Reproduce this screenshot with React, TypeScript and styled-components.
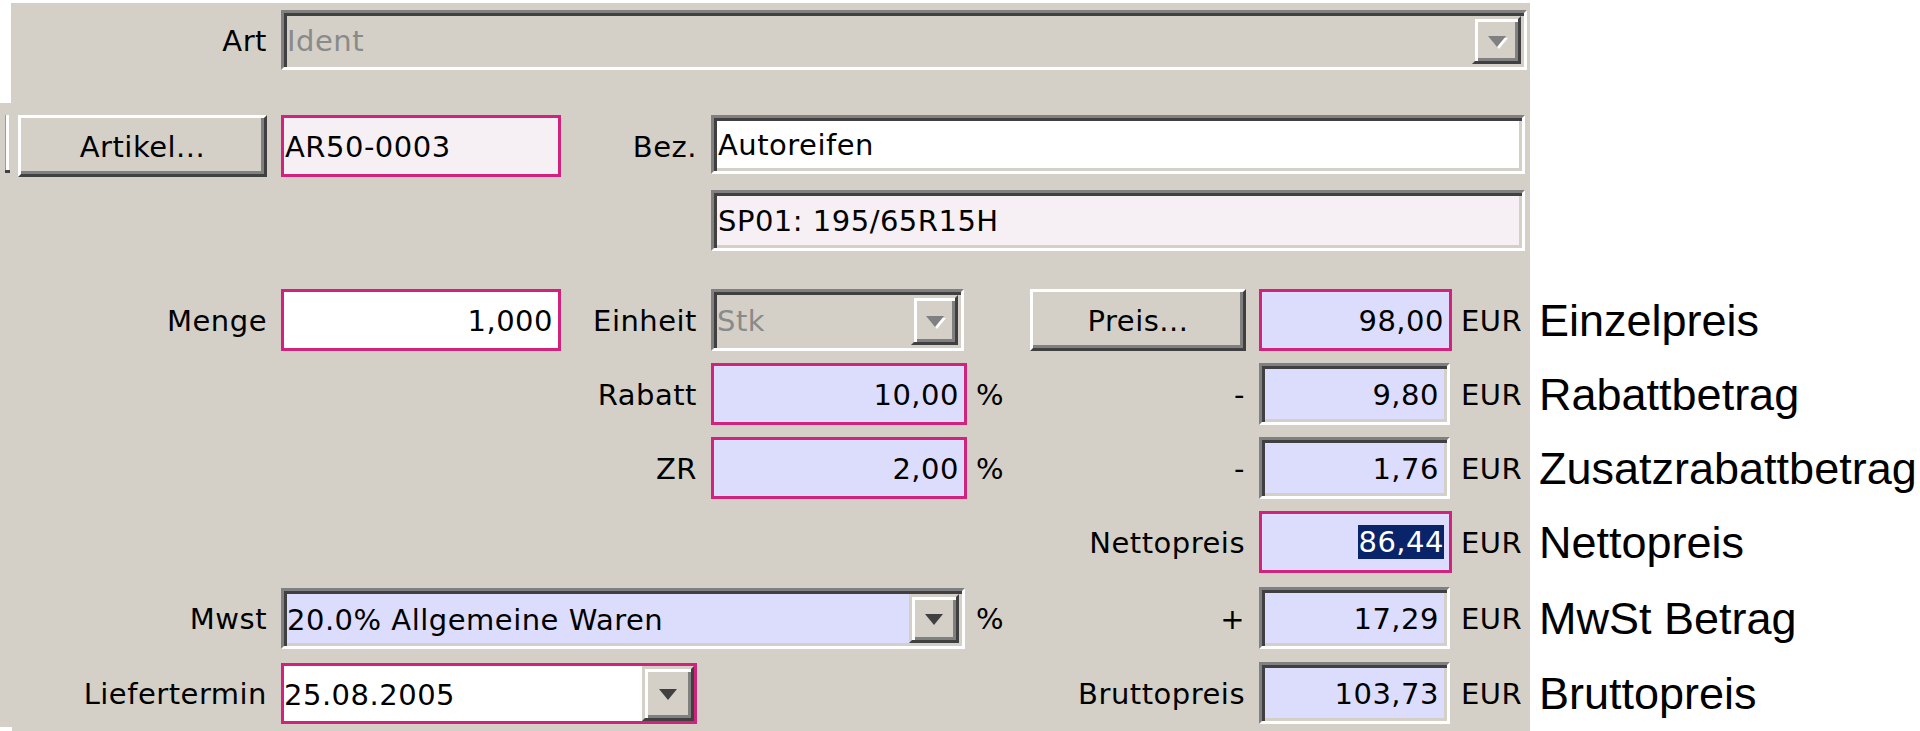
import React from "react";
import styled, { createGlobalStyle, css } from "styled-components";

const FACE = "#d4d0c8";
const PINK = "#d1237d";
const LAV = "#dcdcfc";
const PINKBG = "#f6f0f5";
const ROWS = "60px 107px 74px 100px 74px 74px 74px 76px 75px";

const GlobalStyle = createGlobalStyle`
  *, *::before, *::after { box-sizing: border-box; }
  html, body { margin: 0; padding: 0; background: #fff; overflow: hidden; }
  body { font-family: "DejaVu Sans", "Liberation Sans", sans-serif; }
`;

type Place = { $row: number; $col: number; $span?: number };

const place = css<Place>`
  grid-row: ${(p) => p.$row};
  grid-column: ${(p) => p.$col} / span ${(p) => p.$span ?? 1};
`;

const sunken = css`
  border-style: solid;
  border-width: 3px;
  border-color: #808080 #ffffff #ffffff #808080;
  box-shadow: inset 3px 3px 0 #404040, inset -3px -3px 0 ${FACE};
  padding: 3px;
`;

const raised = css`
  border-style: solid;
  border-width: 3px;
  border-color: #ffffff #404040 #404040 #ffffff;
  box-shadow: inset -3px -3px 0 #808080;
  background: ${FACE};
`;

const Page = styled.div`
  display: flex;
  align-items: flex-start;
  padding-top: 3px;
  width: 1920px;
  height: 731px;
`;

const Panel = styled.div`
  position: relative;
  flex: none;
  width: 1530px;
  height: 728px;
  padding: 7px 0;
  background: ${FACE};
  display: grid;
  grid-template-columns: 281px 280px 150px 256px 63px 229px 193px 78px;
  grid-template-rows: ${ROWS};
  align-items: end;
  font-size: 29px;
  letter-spacing: 0.5px;
  color: #000;

  &::before {
    content: "";
    position: absolute;
    left: 0;
    top: 0;
    width: 11px;
    height: 100px;
    background: #fff;
  }
  &::after {
    content: "";
    position: absolute;
    left: 0;
    bottom: 0;
    width: 12px;
    height: 4px;
    background: #fff;
  }
`;

const Label = styled.div<Place & { $h?: number }>`
  ${place};
  height: ${(p) => p.$h ?? 62}px;
  display: flex;
  align-items: center;
  justify-content: flex-end;
  padding: 2px 14px 0 0;
  white-space: nowrap;
  line-height: 1;
`;

const Unit = styled.div<Place>`
  ${place};
  height: 62px;
  display: flex;
  align-items: center;
  padding: 2px 0 0 9px;
  white-space: nowrap;
  line-height: 1;
`;

const fieldText = css<{ $right?: boolean }>`
  height: 62px;
  display: flex;
  align-items: center;
  justify-content: ${(p) => (p.$right ? "flex-end" : "flex-start")};
  white-space: nowrap;
  overflow: hidden;
  line-height: 1;
`;

const PinkField = styled.div<Place & { $bg: string; $right?: boolean }>`
  ${place};
  ${fieldText};
  border: 3px solid ${PINK};
  background: ${(p) => p.$bg};
  padding: 3px ${(p) => (p.$right ? 5 : 0)}px 0 ${(p) => (p.$right ? 0 : 1)}px;
`;

const SunkenField = styled.div<
  Place & { $bg: string; $right?: boolean; $h?: number; $mr?: number; $mb?: number }
>`
  ${place};
  ${fieldText};
  ${sunken};
  height: ${(p) => p.$h ?? 62}px;
  margin-right: ${(p) => p.$mr ?? 0}px;
  margin-bottom: ${(p) => p.$mb ?? 0}px;
  background: ${(p) => p.$bg};
  padding-top: 5px;
  padding-right: ${(p) => (p.$right ? 8 : 3)}px;
  padding-left: ${(p) => (p.$right ? 3 : 4)}px;
`;

const Selected = styled.span`
  background: #0a246a;
  color: #fff;
  line-height: 34px;
  margin-top: -3px;
`;

const Combo = styled.div<
  Place & { $bg: string; $pink?: boolean; $h?: number; $w?: number; $mr?: number }
>`
  ${place};
  height: ${(p) => p.$h ?? 62}px;
  width: ${(p) => (p.$w ? `${p.$w}px` : "auto")};
  justify-self: ${(p) => (p.$w ? "start" : "stretch")};
  margin-right: ${(p) => p.$mr ?? 0}px;
  display: flex;
  align-items: stretch;
  background: ${(p) => p.$bg};
  ${(p) =>
    p.$pink
      ? css`
          border: 3px solid ${PINK};
        `
      : sunken}
`;

const ComboText = styled.span<{ $disabled?: boolean }>`
  flex: 1;
  display: flex;
  align-items: center;
  padding-top: 3px;
  white-space: nowrap;
  overflow: hidden;
  line-height: 1;
  color: ${(p) => (p.$disabled ? "#8a8a8a" : "#000")};
`;

const DropButton = styled.span<{ $w: number }>`
  flex: none;
  width: ${(p) => p.$w}px;
  ${raised};
  border-color: ${FACE} #404040 #404040 ${FACE};
  box-shadow: inset 3px 3px 0 #ffffff, inset -3px -3px 0 #808080;
  display: flex;
  align-items: center;
  justify-content: center;
`;

const Arrow = styled.span<{ $disabled?: boolean }>`
  width: 0;
  height: 0;
  border-left: 9px solid transparent;
  border-right: 9px solid transparent;
  border-top: 11px solid ${(p) => (p.$disabled ? "#808080" : "#404040")};
  margin-top: 2px;
  ${(p) =>
    p.$disabled &&
    css`
      filter: drop-shadow(2px 2px 0 #ffffff);
    `}
`;

const ButtonCell = styled.div<Place>`
  ${place};
  height: 62px;
  display: flex;
  align-items: flex-start;
  gap: 8px;
  padding-left: 5px;
`;

const ClippedEdge = styled.span`
  flex: none;
  width: 5px;
  height: 58px;
  background: linear-gradient(to right, #9a9a9a 0 1px, #ffffff 1px 4px, ${FACE} 4px);
  border-bottom: 3px solid #404040;
`;

const PushButton = styled.div<Partial<Place> & { $w: number; $placed?: boolean }>`
  ${(p) => (p.$placed ? place : "")};
  flex: none;
  width: ${(p) => p.$w}px;
  height: 62px;
  justify-self: start;
  ${raised};
  display: flex;
  align-items: center;
  justify-content: center;
  padding-top: 2px;
  line-height: 1;
  white-space: nowrap;
`;

const Legend = styled.div`
  flex: 1;
  height: 728px;
  padding: 7px 0;
  display: grid;
  grid-template-rows: ${ROWS};
  align-items: end;
  font-family: "Liberation Sans", Arial, sans-serif;
  font-size: 45px;
  color: #000;
  overflow: hidden;
`;

const LegendItem = styled.div<{ $row: number }>`
  grid-row: ${(p) => p.$row};
  height: 62px;
  display: flex;
  align-items: center;
  padding-left: 9px;
  white-space: nowrap;
  line-height: 1;
`;

const prices = [
  { row: 4, sign: null, value: "98,00", pink: true, legend: "Einzelpreis" },
  { row: 5, sign: "-", value: "9,80", pink: false, legend: "Rabattbetrag" },
  { row: 6, sign: "-", value: "1,76", pink: false, legend: "Zusatzrabattbetrag" },
  { row: 7, sign: "Nettopreis", value: "86,44", pink: true, legend: "Nettopreis" },
  { row: 8, sign: "+", value: "17,29", pink: false, legend: "MwSt Betrag" },
  { row: 9, sign: "Bruttopreis", value: "103,73", pink: false, legend: "Bruttopreis" },
];

export default function App() {
  return (
    <>
      <GlobalStyle />
      <Page>
        <Panel>
          {/* Row 1 */}
          <Label $row={1} $col={1} $h={60}>Art</Label>
          <Combo $row={1} $col={2} $span={7} $bg={FACE} $h={60} $mr={3}>
            <ComboText $disabled>Ident</ComboText>
            <DropButton $w={49}>
              <Arrow $disabled />
            </DropButton>
          </Combo>

          {/* Row 2 */}
          <ButtonCell $row={2} $col={1}>
            <ClippedEdge />
            <PushButton $w={249}>Artikel...</PushButton>
          </ButtonCell>
          <PinkField $row={2} $col={2} $bg={PINKBG}>AR50-0003</PinkField>
          <Label $row={2} $col={3}>Bez.</Label>
          <SunkenField $row={2} $col={4} $span={5} $bg="#ffffff" $h={59} $mb={3} $mr={5}>
            Autoreifen
          </SunkenField>

          {/* Row 3 */}
          <SunkenField $row={3} $col={4} $span={5} $bg={PINKBG} $h={61} $mr={5}>
            SP01: 195/65R15H
          </SunkenField>

          {/* Row 4 */}
          <Label $row={4} $col={1}>Menge</Label>
          <PinkField $row={4} $col={2} $bg="#ffffff" $right>1,000</PinkField>
          <Label $row={4} $col={3}>Einheit</Label>
          <Combo $row={4} $col={4} $bg={FACE} $mr={3}>
            <ComboText $disabled>Stk</ComboText>
            <DropButton $w={47}>
              <Arrow $disabled />
            </DropButton>
          </Combo>
          <PushButton $placed $row={4} $col={6} $w={216}>Preis...</PushButton>

          {/* Row 5 / 6 */}
          <Label $row={5} $col={3}>Rabatt</Label>
          <PinkField $row={5} $col={4} $bg={LAV} $right>10,00</PinkField>
          <Unit $row={5} $col={5}>%</Unit>

          <Label $row={6} $col={3}>ZR</Label>
          <PinkField $row={6} $col={4} $bg={LAV} $right>2,00</PinkField>
          <Unit $row={6} $col={5}>%</Unit>

          {/* Row 8 */}
          <Label $row={8} $col={1}>Mwst</Label>
          <Combo $row={8} $col={2} $span={3} $bg={LAV} $h={61} $mr={2}>
            <ComboText>20.0% Allgemeine Waren</ComboText>
            <DropButton $w={50}>
              <Arrow />
            </DropButton>
          </Combo>
          <Unit $row={8} $col={5}>%</Unit>

          {/* Row 9 */}
          <Label $row={9} $col={1}>Liefertermin</Label>
          <Combo $row={9} $col={2} $span={2} $bg="#ffffff" $pink $w={416} $h={61}>
            <ComboText>25.08.2005</ComboText>
            <DropButton $w={52}>
              <Arrow />
            </DropButton>
          </Combo>

          {/* Price column */}
          {prices.map((p) => (
            <React.Fragment key={p.row}>
              {p.sign && (
                <Label $row={p.row} $col={6}>
                  {p.sign}
                </Label>
              )}
              {p.pink ? (
                <PinkField $row={p.row} $col={7} $bg={LAV} $right>
                  {p.row === 7 ? <Selected>{p.value}</Selected> : p.value}
                </PinkField>
              ) : (
                <SunkenField $row={p.row} $col={7} $bg={LAV} $right $mr={2}>
                  {p.value}
                </SunkenField>
              )}
              <Unit $row={p.row} $col={8}>EUR</Unit>
            </React.Fragment>
          ))}
        </Panel>
        <Legend>
          {prices.map((p) => (
            <LegendItem key={p.row} $row={p.row}>
              {p.legend}
            </LegendItem>
          ))}
        </Legend>
      </Page>
    </>
  );
}
